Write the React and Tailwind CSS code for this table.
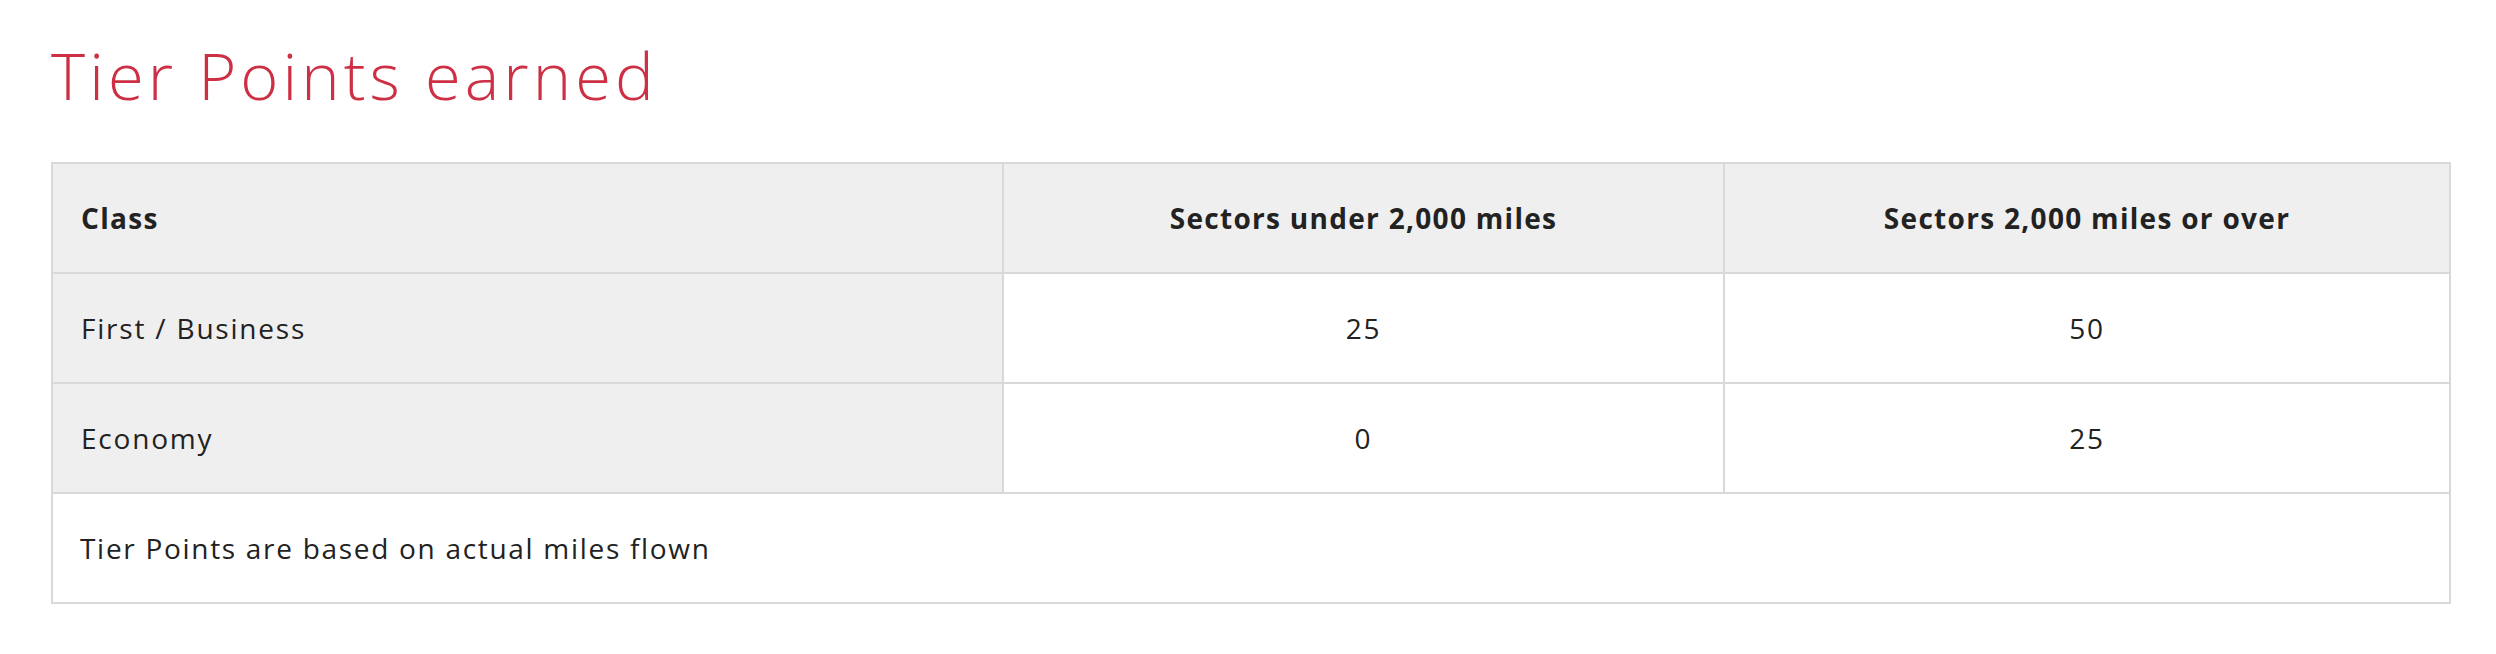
import React from "react";

const rows = [
  { label: "First / Business", under: "25", over: "50" },
  { label: "Economy", under: "0", over: "25" },
];

export default function App() {
  return (
    <div className="min-h-screen bg-white pl-[51px] pt-[43px] font-['Open_Sans',sans-serif] text-[#222]">
      <h1 className="text-[65px] leading-none font-light tracking-[4.1px] text-[#cd3044]">
        Tier Points earned
      </h1>

      <div className="mt-[54px] w-[2400px] border-2 border-[#d9d9d9] text-[28px] leading-none">
        <div className="grid grid-cols-[951px_721px_1fr] border-b-2 border-[#d9d9d9] bg-[#efefef] font-bold tracking-[1.3px]">
          <div className="flex h-[108px] items-center border-r-2 border-[#d9d9d9] px-[28px]">
            Class
          </div>
          <div className="flex h-[108px] items-center justify-center border-r-2 border-[#d9d9d9]">
            Sectors under 2,000 miles
          </div>
          <div className="flex h-[108px] items-center justify-center">
            Sectors 2,000 miles or over
          </div>
        </div>

        {rows.map((row) => (
          <div
            key={row.label}
            className="grid grid-cols-[951px_721px_1fr] border-b-2 border-[#d9d9d9] tracking-[1.8px]"
          >
            <div className="flex h-[108px] items-center border-r-2 border-[#d9d9d9] bg-[#efefef] px-[28px]">
              {row.label}
            </div>
            <div className="flex h-[108px] items-center justify-center border-r-2 border-[#d9d9d9] bg-white">
              {row.under}
            </div>
            <div className="flex h-[108px] items-center justify-center bg-white">
              {row.over}
            </div>
          </div>
        ))}

        <div className="flex h-[108px] items-center bg-white px-[27px] tracking-[1.7px]">
          Tier Points are based on actual miles flown
        </div>
      </div>
    </div>
  );
}
